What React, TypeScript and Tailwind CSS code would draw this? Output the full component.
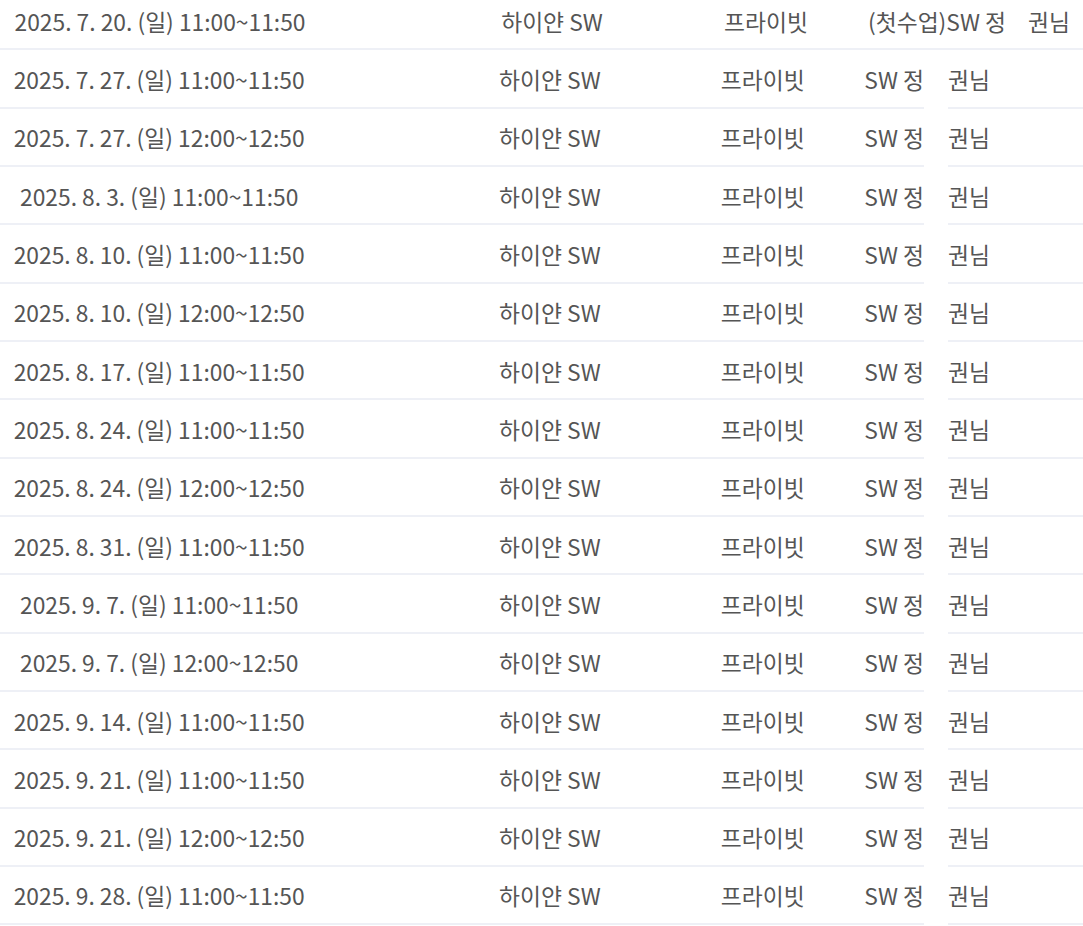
const rows = [
  '2025. 7. 20. (일) 11:00~11:50',
  '2025. 7. 27. (일) 11:00~11:50',
  '2025. 7. 27. (일) 12:00~12:50',
  '2025. 8. 3. (일) 11:00~11:50',
  '2025. 8. 10. (일) 11:00~11:50',
  '2025. 8. 10. (일) 12:00~12:50',
  '2025. 8. 17. (일) 11:00~11:50',
  '2025. 8. 24. (일) 11:00~11:50',
  '2025. 8. 24. (일) 12:00~12:50',
  '2025. 8. 31. (일) 11:00~11:50',
  '2025. 9. 7. (일) 11:00~11:50',
  '2025. 9. 7. (일) 12:00~12:50',
  '2025. 9. 14. (일) 11:00~11:50',
  '2025. 9. 21. (일) 11:00~11:50',
  '2025. 9. 21. (일) 12:00~12:50',
  '2025. 9. 28. (일) 11:00~11:50',
];

export default function App() {
  return (
    <div
      className="w-[1083px] h-[926px] overflow-hidden bg-white text-[22.8px] text-[#555555]"
      style={{ fontFamily: '"Noto Sans CJK KR", "Noto Sans", sans-serif' }}
    >
      <div className="-mt-[8px]">
        {rows.map((date, idx) => {
          const first = idx === 0;
          return (
            <div key={idx} className="flex h-[58.33px] items-stretch">
              <div
                className={
                  first
                    ? 'flex flex-1 items-center pt-[3px] border-b-2 border-[#eef0f6]'
                    : 'flex w-[924px] items-center pt-[3px] border-b-2 border-[#eef0f6]'
                }
              >
                <div className="w-[320px] text-center whitespace-nowrap">{date}</div>
                <div className="ml-[132px] w-[200px] text-center whitespace-nowrap">하이얀 SW</div>
                <div className="ml-[14px] w-[200px] text-center whitespace-nowrap">프라이빗</div>
                {first ? (
                  <div className="ml-[2px] whitespace-nowrap">
                    (첫수업)SW 정<span className="ml-[22px]">권님</span>
                  </div>
                ) : (
                  <div className="ml-[2px] whitespace-nowrap">SW 정</div>
                )}
              </div>
              {!first && (
                <>
                  <div className="w-[24px]" />
                  <div className="flex flex-1 items-center pt-[3px] border-b-2 border-[#eef0f6] whitespace-nowrap">
                    권님
                  </div>
                </>
              )}
            </div>
          );
        })}
      </div>
    </div>
  );
}
